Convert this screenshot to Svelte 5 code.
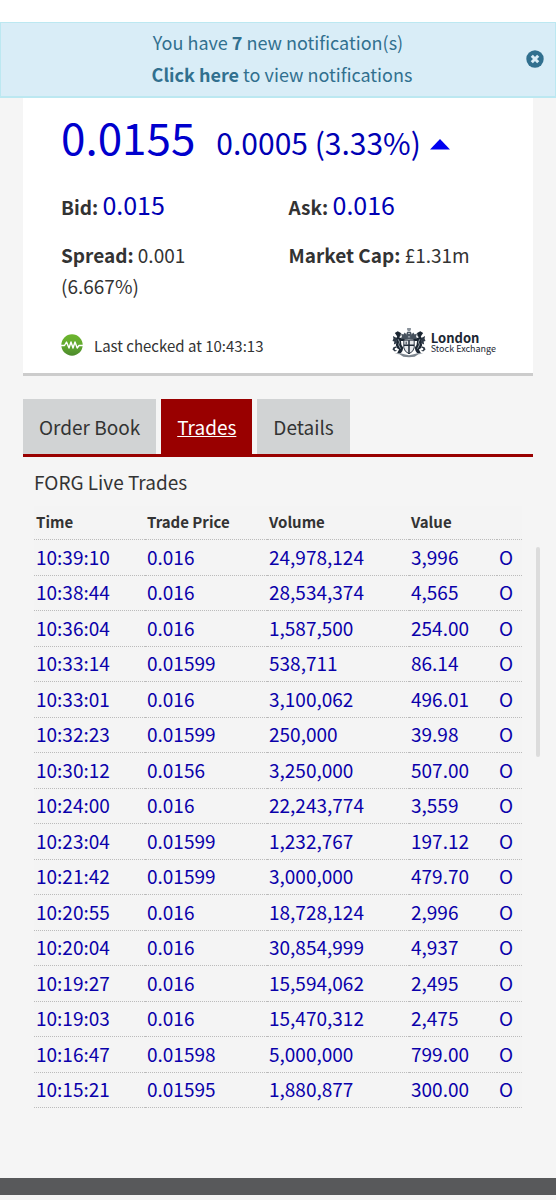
<script>
  let showNotice = $state(true);
  let activeTab = $state('Trades');

  const tabs = ['Order Book', 'Trades', 'Details'];

  const trades = [
    { time: '10:39:10', price: '0.016', volume: '24,978,124', value: '3,996', type: 'O' },
    { time: '10:38:44', price: '0.016', volume: '28,534,374', value: '4,565', type: 'O' },
    { time: '10:36:04', price: '0.016', volume: '1,587,500', value: '254.00', type: 'O' },
    { time: '10:33:14', price: '0.01599', volume: '538,711', value: '86.14', type: 'O' },
    { time: '10:33:01', price: '0.016', volume: '3,100,062', value: '496.01', type: 'O' },
    { time: '10:32:23', price: '0.01599', volume: '250,000', value: '39.98', type: 'O' },
    { time: '10:30:12', price: '0.0156', volume: '3,250,000', value: '507.00', type: 'O' },
    { time: '10:24:00', price: '0.016', volume: '22,243,774', value: '3,559', type: 'O' },
    { time: '10:23:04', price: '0.01599', volume: '1,232,767', value: '197.12', type: 'O' },
    { time: '10:21:42', price: '0.01599', volume: '3,000,000', value: '479.70', type: 'O' },
    { time: '10:20:55', price: '0.016', volume: '18,728,124', value: '2,996', type: 'O' },
    { time: '10:20:04', price: '0.016', volume: '30,854,999', value: '4,937', type: 'O' },
    { time: '10:19:27', price: '0.016', volume: '15,594,062', value: '2,495', type: 'O' },
    { time: '10:19:03', price: '0.016', volume: '15,470,312', value: '2,475', type: 'O' },
    { time: '10:16:47', price: '0.01598', volume: '5,000,000', value: '799.00', type: 'O' },
    { time: '10:15:21', price: '0.01595', volume: '1,880,877', value: '300.00', type: 'O' },
  ];
</script>

<!-- left half of the coat of arms, drawn twice with the second one mirrored -->
{#snippet supporter()}
  <path d="M16.5 8.5l-3-3.500-1.500 2-2.500-1 1 3-1 2 4 1.500 4-.5z" fill="#46515d" />
  <path d="M3 5.5l3-2 3.500 2-.5 3-1.500 1.500 2.500 1 3.500 1-.5 2-3.500 0 .5 4 2 3-1 3.500-1.500 2-4 0 2-3.500-2-1.500-1.500-3.500 1-3-1-3.500 1.500-2.500-1-1.500z" fill="#1b2632" />
  <path d="M4.500 10.500L1 8.500l.5 3-1 2.500 2 .5-.5 3 3.500-1.500z" fill="#2f3a47" />
  <path d="M4.500 19.500l-3 1-1 2.500 2.500 2 2.500-1-2.500-.5 0-2 2-.5z" fill="#2f3a47" />
  <path d="M6.500 12l1.500 3-1 3 2 4" fill="none" stroke="#97a0a9" />
  <path d="M3 27.500l5 .5 4 2.500 6 .5v-2l-5-1-5-1.500z" fill="#7c858e" />
{/snippet}

<div class="page">
  {#if showNotice}
    <div class="notice">
      <div>You have <b>7</b> new notification(s)</div>
      <div><a href="#notifications"><b>Click here</b></a> to view notifications</div>
      <button class="close" aria-label="Close" onclick={() => (showNotice = false)}>
        <svg viewBox="0 0 18 18" width="18" height="18">
          <circle cx="9" cy="9" r="8.7" fill="#31708f" />
          <path d="M5.8 5.8l6.4 6.4M12.2 5.8l-6.4 6.4" stroke="#d9edf7" stroke-width="3" />
        </svg>
      </button>
    </div>
  {/if}

  <section class="quote">
    <div class="headline">
      <span class="price">0.0155</span>
      <span class="change">0.0005 (3.33%)</span>
      <svg class="arrow" viewBox="0 0 20 16" width="20" height="16">
        <path d="M10 0L20 10.5H0z" fill="#0000f0" />
      </svg>
    </div>
    <div class="stats">
      <div class="big"><b>Bid:</b> <span>0.015</span></div>
      <div class="big"><b>Ask:</b> <span>0.016</span></div>
      <div class="spread"><b>Spread:</b> 0.001 (6.667%)</div>
      <div><b>Market Cap:</b> £1.31m</div>
    </div>
    <div class="checked">
      <svg viewBox="0 0 22 22" width="22" height="22">
        <defs>
          <linearGradient id="pulse" x1="0" y1="0" x2="0" y2="1">
            <stop offset="0" stop-color="#6cb52d" />
            <stop offset="0.5" stop-color="#62a92f" />
            <stop offset="1" stop-color="#4c8a2c" />
          </linearGradient>
        </defs>
        <circle cx="11" cy="11" r="10.7" fill="url(#pulse)" />
        <path
          d="M0 11.5H3.5L5.5 8L8 14L10 8L12 14L14 8L16.2 14L18 11.5H22"
          fill="none" stroke="#fff" stroke-width="1.4" stroke-linejoin="round"
        />
      </svg>
      <span>Last checked at 10:43:13</span>
      <div class="exchange">
        <svg viewBox="0 0 36 32" width="34" height="32">
          {@render supporter()}
          <g transform="translate(36 0) scale(-1 1)">{@render supporter()}</g>
          <!-- crest and helmet -->
          <path d="M16 0h4v2l-1 1.500h-2L16 2z" fill="#8a929b" />
          <path d="M16 4h4l1 3-1 2 1 3h-6l1-3-1-2z" fill="#4c5763" />
          <path d="M17 6h2M17 9.500h2" stroke="#c9ced3" />
          <!-- shield with cross -->
          <path d="M12.500 13h11v8q-.5 4-5.500 6.500-5-2.500-5.500-6.500z" fill="#e4e7ea" stroke="#222d3a" />
          <path d="M18 13v14M12.500 18.500h11" stroke="#222d3a" stroke-width="1.600" />
          <path d="M15 14.500v3" stroke="#222d3a" />
        </svg>
        <div class="exchange-name"><b>London</b>Stock Exchange</div>
      </div>
    </div>
  </section>

  <nav class="tabs">
    {#each tabs as tab}
      <button class:active={tab === activeTab} onclick={() => (activeTab = tab)}>{tab}</button>
    {/each}
  </nav>

  <section class="trades">
    <h2>FORG Live Trades</h2>
    <table>
      <thead>
        <tr>
          <th class="time">Time</th>
          <th class="trade-price">Trade Price</th>
          <th class="volume">Volume</th>
          <th class="value">Value</th>
          <th></th>
        </tr>
      </thead>
      <tbody>
        {#each trades as trade}
          <tr>
            <td>{trade.time}</td>
            <td>{trade.price}</td>
            <td>{trade.volume}</td>
            <td>{trade.value}</td>
            <td>{trade.type}</td>
          </tr>
        {/each}
      </tbody>
    </table>
    <div class="scrollbar"></div>
  </section>

  <footer></footer>
</div>

<style>
  :global(body) {
    background: #f5f5f5;
  }
  .page {
    font-family: "Noto Sans CJK SC", "Open Sans", sans-serif;
    font-size: 19px;
    line-height: 31px;
    color: #333;
    border-top: 22px solid #fff;
  }
  button {
    font: inherit;
    color: inherit;
    border: none;
    cursor: pointer;
  }

  .notice {
    position: relative;
    box-sizing: border-box;
    height: 76px;
    padding-top: 3px;
    text-align: center;
    color: #31708f;
    background: #d9edf7;
    border: 1px solid #bce8f1;
    border-bottom-width: 2px;
    font-size: 18px;
    line-height: 32px;
  }
  .notice a {
    padding-left: 8px;
    color: inherit;
    text-decoration: none;
  }
  .close {
    position: absolute;
    top: 27px;
    right: 11px;
    padding: 0;
    background: none;
    line-height: 0;
  }

  .quote {
    margin: 0 23px;
    padding: 6px 37px 10px 38px;
    background: #fff;
    border-bottom: 3px solid #ccc;
  }
  .headline {
    display: flex;
    align-items: baseline;
    color: #0000cd;
    line-height: 64px;
  }
  .price {
    font-size: 44px;
  }
  .change {
    margin-left: 21px;
    font-size: 30px;
    color: #0000b4;
  }
  .arrow {
    margin-left: 9px;
  }
  .stats {
    display: grid;
    grid-template-columns: 1fr 1fr;
    column-gap: 20px;
    row-gap: 17px;
    margin-top: 15px;
  }
  .big span {
    font-size: 25px;
    color: #0000b4;
  }
  .spread {
    max-width: 170px;
  }
  .checked {
    display: flex;
    align-items: center;
    margin-top: 26px;
    font-size: 15px;
  }
  .checked span {
    margin-left: 11px;
  }
  .exchange {
    display: flex;
    align-items: center;
    margin-left: auto;
    margin-bottom: 4px;
    color: #1c2733;
  }
  .exchange-name {
    margin-left: 5px;
    font-size: 9px;
    line-height: 11px;
  }
  .exchange-name b {
    display: block;
    font-size: 13px;
  }

  .tabs {
    display: flex;
    gap: 5px;
    margin: 23px 23px 0;
    border-bottom: 3px solid #900;
  }
  .tabs button {
    padding: 12px 16px;
    background: #d1d3d4;
  }
  .tabs .active {
    color: #fff;
    background: #900;
    text-decoration: underline;
  }

  .trades {
    position: relative;
    padding: 9px 34px 70px;
  }
  h2 {
    margin: 0;
    font-size: 19px;
    font-weight: normal;
  }
  table {
    width: 100%;
    table-layout: fixed;
    border-collapse: separate;
    border-spacing: 0;
    margin-top: 9px;
    background: #f4f4f4;
  }
  th,
  td {
    box-sizing: border-box;
    padding: 0 2px 2px;
    text-align: left;
    border-bottom: 1px dotted #bbb;
    line-height: 30px;
  }
  th {
    height: 34px;
    font-size: 15px;
  }
  td {
    height: 36px;
    color: #0a00aa;
  }
  tr:nth-child(even) td {
    height: 35px;
  }
  .time {
    width: 111px;
  }
  .trade-price {
    width: 122px;
  }
  .volume {
    width: 142px;
  }
  .value {
    width: 88px;
  }
  .scrollbar {
    position: absolute;
    top: 90px;
    right: 16px;
    width: 4px;
    height: 210px;
    border-radius: 2px;
    background: #dcdcdc;
  }

  footer {
    height: 17px;
    background: #58595b;
    border-bottom: 5px solid #f5f5f5;
  }
</style>
